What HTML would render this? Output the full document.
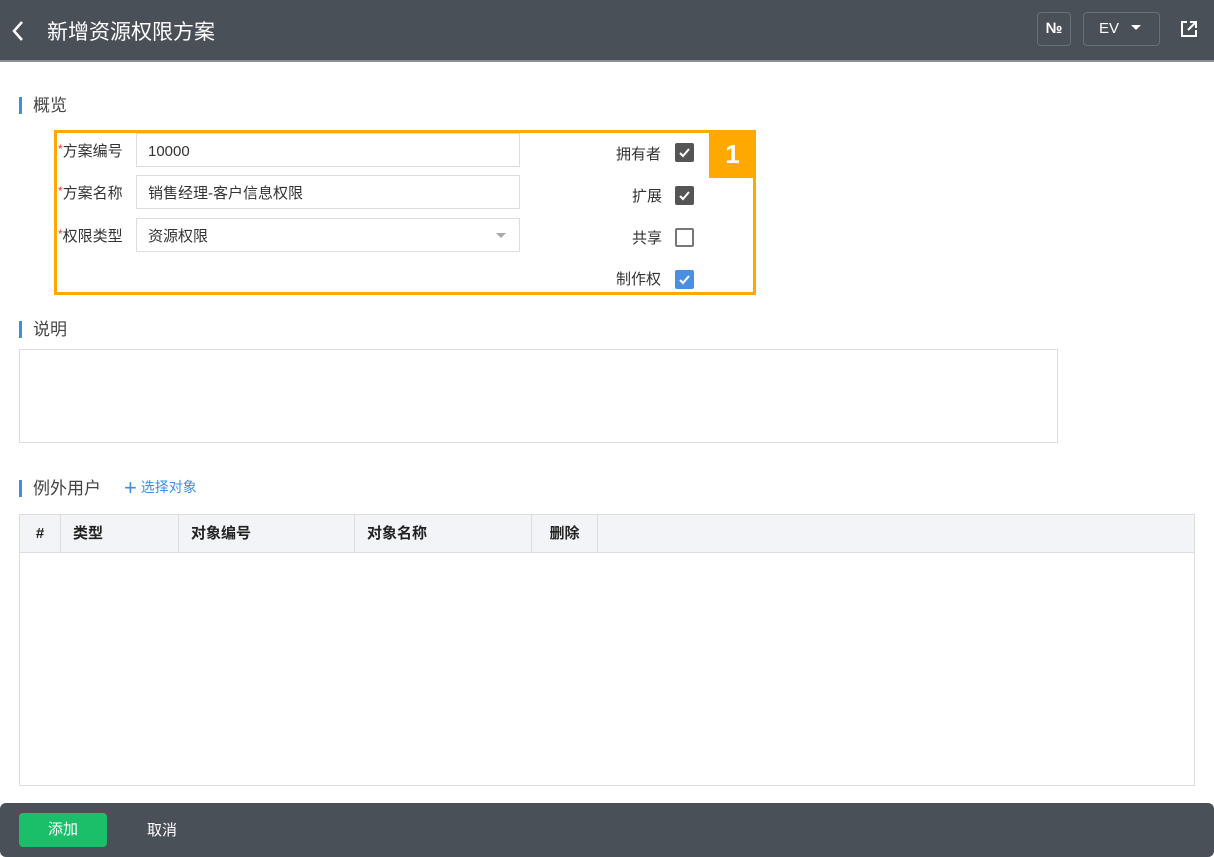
<!DOCTYPE html>
<html><head><meta charset="utf-8"><style>
*{box-sizing:border-box;margin:0;padding:0}
body{width:1214px;height:857px;background:#fff;font-family:"Liberation Sans","Noto Sans CJK SC",sans-serif;position:relative;overflow:hidden;color:#333}
.abs{position:absolute}
.hdr{left:0;top:0;width:1214px;height:62px;background:#4a5058;border-bottom:2px solid #8c9096}
.title{left:47px;top:20px;font-size:21px;line-height:26px;color:#fff}
.sec{font-size:17px;line-height:20px;color:#444}
.sec:before{content:"";position:absolute;left:-14px;top:1px;width:3px;height:17px;background:#3d8ee6}
.lbl{font-size:15px;line-height:20px;color:#333}
.lbl b{color:#e33;font-weight:normal;font-size:12px;vertical-align:top;line-height:14px}
.inp{border:1px solid #ddd;height:34px;font-size:15px;line-height:20px;padding:8px 11px 0;color:#333}
.cb{width:19px;height:19px;border-radius:2px;background:#555;}
.cb svg{display:block}
.th{top:514px;height:39px;border-right:1px solid #ddd;font-size:15px;line-height:20px;font-weight:bold;color:#222;padding-top:10px}
</style></head><body>
<div class="abs hdr"></div>
<svg class="abs" style="left:10px;top:20px" width="16" height="22"><path d="M12 2 L4 11 L12 20" stroke="#fff" stroke-width="2.5" fill="none"/></svg>
<div class="abs title">新增资源权限方案</div>
<div class="abs" style="left:1037px;top:12px;width:34px;height:34px;border:1px solid #6a7078;border-radius:4px;color:#fff;font-size:15px;font-weight:bold;text-align:center;line-height:32px">№</div>
<div class="abs" style="left:1083px;top:12px;width:77px;height:34px;border:1px solid #6a7078;border-radius:4px;color:#fff;font-size:15px;line-height:32px;padding-left:15px">EV <span style="display:inline-block;width:0;height:0;border-left:5px solid transparent;border-right:5px solid transparent;border-top:5px solid #fff;margin-left:8px;vertical-align:3px"></span></div>
<svg class="abs" style="left:1179px;top:19px" width="20" height="20"><path d="M8 3 H3 V17 H17 V11" stroke="#fff" stroke-width="2" fill="none"/><path d="M9 11 L16 4 M11 3 H17 V9" stroke="#fff" stroke-width="2" fill="none"/></svg>

<div class="abs sec" style="left:33px;top:96px">概览</div>
<div class="abs" style="left:54px;top:130px;width:702px;height:165px;border:3px solid #ffa800"></div>
<div class="abs" style="left:709px;top:130px;width:47px;height:48px;background:#ffa800;color:#fff;font-size:26px;font-weight:bold;text-align:center;line-height:48px">1</div>
<div class="abs lbl" style="left:58px;top:142px"><b>*</b>方案编号</div>
<div class="abs lbl" style="left:58px;top:184px"><b>*</b>方案名称</div>
<div class="abs lbl" style="left:58px;top:227px"><b>*</b>权限类型</div>
<div class="abs inp" style="left:136px;top:133px;width:384px">10000</div>
<div class="abs inp" style="left:136px;top:175px;width:384px">销售经理-客户信息权限</div>
<div class="abs inp" style="left:136px;top:218px;width:384px">资源权限</div>
<div class="abs" style="left:496px;top:233px;border-left:5px solid transparent;border-right:5px solid transparent;border-top:5px solid #aaa"></div>
<div class="abs lbl" style="left:616px;top:145px">拥有者</div>
<div class="abs lbl" style="left:632px;top:187px">扩展</div>
<div class="abs lbl" style="left:632px;top:229px">共享</div>
<div class="abs lbl" style="left:616px;top:270px">制作权</div>
<div class="abs cb" style="left:675px;top:143px"><svg width="19" height="19"><path d="M5 10 L8 13 L14 6" stroke="#fff" stroke-width="2" fill="none"/></svg></div>
<div class="abs cb" style="left:675px;top:186px"><svg width="19" height="19"><path d="M5 10 L8 13 L14 6" stroke="#fff" stroke-width="2" fill="none"/></svg></div>
<div class="abs cb" style="left:675px;top:228px;background:#fff;border:2px solid #777"></div>
<div class="abs cb" style="left:675px;top:270px;background:#4a90e2"><svg width="19" height="19"><path d="M5 10 L8 13 L14 6" stroke="#fff" stroke-width="2" fill="none"/></svg></div>

<div class="abs sec" style="left:33px;top:320px">说明</div>
<div class="abs" style="left:19px;top:349px;width:1039px;height:94px;border:1px solid #ddd"></div>

<div class="abs sec" style="left:33px;top:479px">例外用户</div>
<div class="abs" style="left:124px;top:477px;color:#3d8ee6;font-size:14px;line-height:20px"><span style="font-size:22px;vertical-align:-3px;font-weight:300">+</span> 选择对象</div>
<div class="abs" style="left:19px;top:514px;width:1176px;height:272px;border:1px solid #ddd"></div>
<div class="abs" style="left:20px;top:515px;width:1174px;height:38px;background:#f3f4f7;border-bottom:1px solid #ddd"></div>
<div class="abs th" style="left:20px;width:41px;text-align:center">#</div>
<div class="abs th" style="left:61px;width:118px;padding-left:12px">类型</div>
<div class="abs th" style="left:179px;width:176px;padding-left:12px">对象编号</div>
<div class="abs th" style="left:355px;width:177px;padding-left:12px">对象名称</div>
<div class="abs th" style="left:532px;width:66px;text-align:center">删除</div>

<div class="abs" style="left:0;top:803px;width:1214px;height:54px;background:#4a5058;border-radius:6px"></div>
<div class="abs" style="left:19px;top:813px;width:88px;height:34px;background:#1cbf69;border-radius:4px;color:#fff;font-size:15px;text-align:center;line-height:34px">添加</div>
<div class="abs" style="left:147px;top:821px;color:#fff;font-size:15px;line-height:20px">取消</div>
</body></html>
